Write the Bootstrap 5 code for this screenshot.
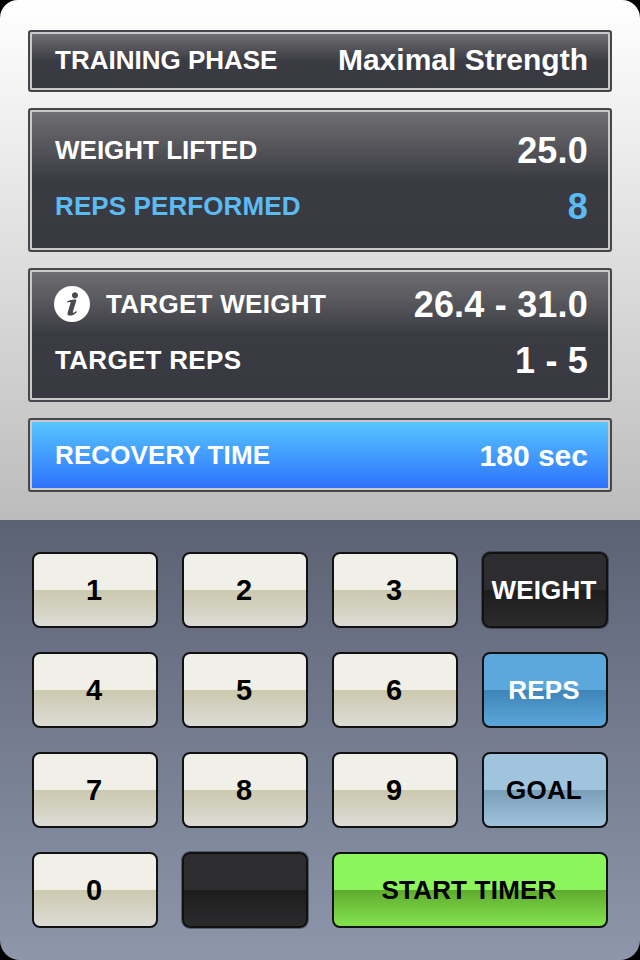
<!DOCTYPE html>
<html lang="en"><head><meta charset="utf-8">
<link href="https://cdn.jsdelivr.net/npm/bootstrap@5.3.0/dist/css/bootstrap.min.css" rel="stylesheet">
<style>
html,body{margin:0;height:960px;background:#000;overflow:hidden}
.screen{width:640px;height:960px;border-radius:18px 18px 20px 20px;overflow:hidden;font-family:"Liberation Sans",Arial,sans-serif;font-weight:700}
.upper{height:520px;padding:30px 28px 0;background:linear-gradient(#fff,#bcbcbc);gap:16px}
.panel{border:2px solid #46474c;border-radius:3px;box-shadow:inset 0 0 0 2px #c9c9c9;padding:2px 22px 2px 25px;background:linear-gradient(#6f6f72 2px,#3b3c43 50%,#383940);color:#fff}
.p1{height:62px;padding-bottom:4px}.p2{height:144px;padding-top:12px;padding-bottom:16px}.p3{height:134px;padding-top:6px;padding-bottom:12px}.p4{height:74px;padding-bottom:3px;background:linear-gradient(#57c6ff 2px,#2f74fb 95%)}
.row-line{flex:1 1 0}
.lab{font-size:26px;line-height:1;letter-spacing:.1px}
.lab-tight{letter-spacing:0}
.lab-wide{letter-spacing:.3px}
.val{font-size:36px;line-height:1;letter-spacing:.2px;padding-top:2px}
.val-sm{font-size:30px;line-height:1;padding-top:3px}
.val-md{font-size:30px;line-height:1}
.accent{color:#5bbcf4}
.info{width:36px;height:36px;border-radius:50%;background:#fff;flex:none;margin:0 16px 0 -1px}
.lower{height:440px;padding:32px 32px 0;background:linear-gradient(#5c6274,#8d96ab);display:grid;grid-template-columns:repeat(4,126px);grid-auto-rows:76px;gap:24px}
.key.btn{border:2px solid #111;border-radius:8px;color:#000;font-size:29px;font-weight:700;padding:2px 2px 0 0;height:76px;background:linear-gradient(#f1f0e8 0 50%,#cbc9ae 50%,#dcdcd6 100%)}
.key.word{font-size:26px;padding:0 2px 0 0;letter-spacing:.2px}
.key.dark{color:#fff;box-shadow:0 0 0 1px rgba(0,0,0,.35);background:linear-gradient(#2d2d2f 0 50%,#1d1d1e 50%,#2b2b2d 100%)}
.key.blue{color:#fff;background:linear-gradient(#5ba8dc 0 50%,#3f85b6 50%,#5aa6da 100%)}
.key.sky{background:linear-gradient(#a0c3de 0 50%,#7a9db8 50%,#9fc2dd 100%)}
.key.green{grid-column:span 2;background:linear-gradient(#8cf55c 0 50%,#60ab2f 50%,#83e44e 100%)}
</style></head><body>
<div class="screen">
<section class="upper d-flex flex-column">
  <div class="panel p1 d-flex align-items-center justify-content-between"><span class="lab lab-tight">TRAINING PHASE</span><span class="val-md">Maximal Strength</span></div>
  <div class="panel p2 d-flex flex-column">
    <div class="row-line d-flex align-items-center justify-content-between"><span class="lab lab-tight">WEIGHT LIFTED</span><span class="val">25.0</span></div>
    <div class="row-line d-flex align-items-center justify-content-between accent"><span class="lab">REPS PERFORMED</span><span class="val">8</span></div>
  </div>
  <div class="panel p3 d-flex flex-column">
    <div class="row-line d-flex align-items-center justify-content-between"><span class="d-flex align-items-center"><svg class="info" viewBox="0 0 36 36" aria-hidden="true"><path fill="#4a4b50" d="M21 6.200a3.100 3.100 0 1 1-.1 0zM13 15.500c2.800-1.500 5.500-2 8.500-2 .8 0 1 .6.800 1.300l-3.400 11c-.3 1 .5 1.200 1.200.7l2-1.400.8 1.100c-2 2-4.500 3.400-7 3.400-2 0-2.800-1-2.300-2.900l2.900-9.700c.2-.8-.2-1.100-.9-1l-2.300.6z"/></svg><span class="lab lab-wide">TARGET WEIGHT</span></span><span class="val">26.4 - 31.0</span></div>
    <div class="row-line d-flex align-items-center justify-content-between"><span class="lab lab-wide">TARGET REPS</span><span class="val">1 - 5</span></div>
  </div>
  <div class="panel p4 d-flex align-items-center justify-content-between"><span class="lab">RECOVERY TIME</span><span class="val-sm">180 sec</span></div>
</section>
<section class="lower">
  <button class="btn key">1</button><button class="btn key">2</button><button class="btn key">3</button><button class="btn key word dark">WEIGHT</button>
  <button class="btn key">4</button><button class="btn key">5</button><button class="btn key">6</button><button class="btn key word blue">REPS</button>
  <button class="btn key">7</button><button class="btn key">8</button><button class="btn key">9</button><button class="btn key word sky">GOAL</button>
  <button class="btn key">0</button><button class="btn key dark" aria-label="Blank"></button><button class="btn key word green">START TIMER</button>
</section>
</div>
</body></html>
